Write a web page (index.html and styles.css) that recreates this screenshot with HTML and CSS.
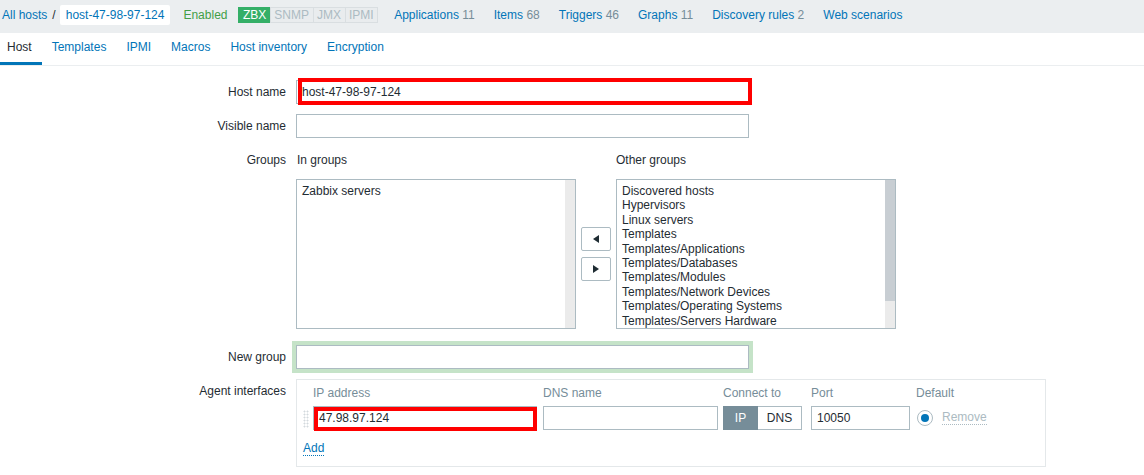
FILE: index.html
```html
<!DOCTYPE html>
<html>
<head>
<meta charset="utf-8">
<title>Host</title>
<link rel="stylesheet" href="styles.css">
</head>
<body>
<div class="topbar">
  <a class="crumb">All hosts</a><span class="sep">/</span><span class="crumb-cur">host-47-98-97-124</span>
  <span class="enabled">Enabled</span>
  <span class="badges"><span class="badge on">ZBX</span><span class="badge">SNMP</span><span class="badge">JMX</span><span class="badge">IPMI</span></span>
  <ul class="links">
    <li><a>Applications</a> <span class="cnt">11</span></li>
    <li><a>Items</a> <span class="cnt">68</span></li>
    <li><a>Triggers</a> <span class="cnt">46</span></li>
    <li><a>Graphs</a> <span class="cnt">11</span></li>
    <li><a>Discovery rules</a> <span class="cnt">2</span></li>
    <li><a>Web scenarios</a></li>
  </ul>
</div>
<ul class="tabs">
  <li class="active"><a>Host</a></li>
  <li><a>Templates</a></li>
  <li><a>IPMI</a></li>
  <li><a>Macros</a></li>
  <li><a>Host inventory</a></li>
  <li><a>Encryption</a></li>
</ul>
<div class="form">
  <div class="row">
    <div class="lbl">Host name</div>
    <div class="field">
      <div class="marked">
        <div class="input wide">host-47-98-97-124</div>
        <div class="redbox host-red"></div>
      </div>
    </div>
  </div>
  <div class="row gap10">
    <div class="lbl">Visible name</div>
    <div class="field"><div class="input wide"></div></div>
  </div>
  <div class="row gap10">
    <div class="lbl">Groups</div>
    <div class="field">
      <div class="groups-head"><span class="gh-in">In groups</span><span>Other groups</span></div>
      <div class="groups">
        <div class="listbox">
          <div class="opts"><div>Zabbix servers</div></div>
          <div class="sb"></div>
        </div>
        <div class="move">
          <div class="btn"><svg width="6" height="8" viewBox="0 0 6 8"><polygon points="6,0 6,8 0,4" fill="#1f2c33"/></svg></div>
          <div class="btn"><svg width="6" height="8" viewBox="0 0 6 8"><polygon points="0,0 0,8 6,4" fill="#1f2c33"/></svg></div>
        </div>
        <div class="listbox">
          <div class="opts">
            <div>Discovered hosts</div>
            <div>Hypervisors</div>
            <div>Linux servers</div>
            <div>Templates</div>
            <div>Templates/Applications</div>
            <div>Templates/Databases</div>
            <div>Templates/Modules</div>
            <div>Templates/Network Devices</div>
            <div>Templates/Operating Systems</div>
            <div>Templates/Servers Hardware</div>
          </div>
          <div class="sb"><div class="thumb"></div></div>
        </div>
      </div>
    </div>
  </div>
  <div class="row gap16">
    <div class="lbl">New group</div>
    <div class="field"><div class="input wide focus"></div></div>
  </div>
  <div class="row gap10">
    <div class="lbl">Agent interfaces</div>
    <div class="field">
      <div class="ifaces">
        <div class="ihead">
          <span></span><span>IP address</span><span>DNS name</span><span>Connect to</span><span>Port</span><span>Default</span>
        </div>
        <div class="irow">
          <span class="handle"></span>
          <div class="marked ipwrap">
            <div class="input ip">47.98.97.124</div>
            <div class="redbox ip-red"></div>
          </div>
          <div><div class="input dns"></div></div>
          <div class="seg"><span class="seg-on">IP</span><span class="seg-off">DNS</span></div>
          <div><div class="input port">10050</div></div>
          <div class="def"><span class="radio"><span class="dot"></span></span><span class="remove">Remove</span></div>
        </div>
        <div class="add"><a>Add</a></div>
      </div>
    </div>
  </div>
</div>
</body>
</html>
```

FILE: styles.css
```css
* { box-sizing: border-box; }
html, body { margin: 0; padding: 0; background: #fff; }
body {
  font-family: "Liberation Sans", Arial, sans-serif;
  font-size: 12px;
  line-height: 14px;
  color: #1f2c33;
  width: 1144px;
  height: 475px;
  overflow: hidden;
}
a { color: #0275b8; text-decoration: none; }
ul { list-style: none; margin: 0; padding: 0; }

.topbar {
  height: 33px;
  background: #ebeef0;
  display: flex;
  align-items: center;
  padding: 0 0 3px 2px;
  white-space: nowrap;
}
.sep { margin: 0 4px 0 5px; color: #1f2c33; }
.crumb-cur {
  display: inline-block;
  background: #fff;
  color: #0275b8;
  height: 20px;
  line-height: 20px;
  padding: 0 6px;
  border-radius: 2px;
}
.enabled { color: #429e47; margin-left: 13px; }
.badges { display: flex; margin-left: 11px; }
.badge {
  display: inline-block;
  height: 16px;
  line-height: 14px;
  padding: 0 3.5px;
  border: 1px solid #d9dee1;
  background: #e9ecee;
  color: #acbbc2;
  margin-left: -1px;
}
.badge.on {
  background: #34af67;
  border-color: #34af67;
  color: #fff;
  margin-left: 0;
}
.links { display: flex; margin-left: 16px; }
.links li { margin-right: 19px; }
.cnt { color: #768d99; }

.tabs {
  display: flex;
  border-bottom: 1px solid #ebeef0;
  height: 33px;
}
.tabs li a {
  display: block;
  padding: 0 10px;
  height: 32px;
  line-height: 29px;
  border-bottom: 3px solid transparent;
}
.tabs li:first-child a { padding-left: 7px; }
.tabs li.active a { color: #1f2c33; border-bottom-color: #0275b8; }

.form { padding-top: 14px; }
.row { display: flex; }
.gap10 { margin-top: 10px; }
.gap16 { margin-top: 16px; }
.lbl {
  width: 286px;
  text-align: right;
  padding-top: 5px;
  line-height: 14px;
  flex: none;
}
.field { margin-left: 10px; }

.input {
  height: 24px;
  border: 1px solid #acbbc2;
  background: #fff;
  padding: 0 5px;
  line-height: 22px;
  white-space: nowrap;
}
.wide { width: 453px; }
.focus { box-shadow: 0 0 0 4px #c5e3c8; }

.marked { position: relative; }
.ipwrap { width: 224px; }
.redbox {
  position: absolute;
  border: 4px solid #ff0000;
  pointer-events: none;
}
.host-red { left: 2px; top: -2px; right: -3px; bottom: -1px; }
.ip-red { left: 1px; top: 1px; right: 0; bottom: -1px; }

.groups-head {
  display: flex;
  padding-top: 5px;
  margin-bottom: 12px;
  padding-left: 1px;
}
.gh-in { width: 319px; }
.groups { display: flex; }
.listbox {
  width: 280px;
  height: 150px;
  border: 1px solid #acbbc2;
  display: flex;
  background: #fff;
}
.opts {
  flex: 1;
  padding: 4px 5px 0;
  line-height: 14.4px;
  overflow: hidden;
  white-space: nowrap;
}
.sb { width: 10px; background: #ebebeb; }
.thumb { height: 121px; background: #c8ced3; }
.move {
  display: flex;
  flex-direction: column;
  justify-content: center;
  gap: 6px;
  margin: 0 5px;
}
.btn {
  width: 30px;
  height: 24px;
  border: 1px solid #acbbc2;
  border-radius: 2px;
  background: #fff;
  display: flex;
  align-items: center;
  justify-content: center;
}

.ifaces {
  width: 750px;
  height: 88px;
  border: 1px solid #e4e8ea;
  padding: 6px 6px 0 6px;
}
.ihead, .irow {
  display: grid;
  grid-template-columns: 10px 230px 180px 88px 105px 1fr;
}
.ihead { color: #768d99; height: 14px; }
.irow { margin-top: 6px; align-items: center; }
.handle {
  width: 6px;
  height: 18px;
  background-image: radial-gradient(circle, #d3d9dd 0.9px, transparent 1.1px);
  background-size: 3px 3px;
  margin-top: 1px;
}
.ip { width: 224px; }
.dns { width: 175px; }
.port { width: 99px; }
.seg { display: flex; height: 24px; }
.seg-on {
  width: 35px;
  background: #768d99;
  color: #fff;
  text-align: center;
  line-height: 24px;
}
.seg-off {
  width: 44px;
  border: 1px solid #acbbc2;
  border-left: none;
  text-align: center;
  line-height: 22px;
}
.def { display: flex; align-items: center; }
.radio {
  width: 16px;
  height: 16px;
  border: 1px solid #acbbc2;
  border-radius: 50%;
  display: flex;
  align-items: center;
  justify-content: center;
  margin: 0 9px 0 1px;
}
.dot { width: 8px; height: 8px; border-radius: 50%; background: #0275b8; }
.remove { color: #acbbc2; border-bottom: 1px dotted #acbbc2; line-height: 13px; }
.add { margin-top: 11px; }
.add a { border-bottom: 1px dotted #0275b8; line-height: 13px; display: inline-block; }
```
